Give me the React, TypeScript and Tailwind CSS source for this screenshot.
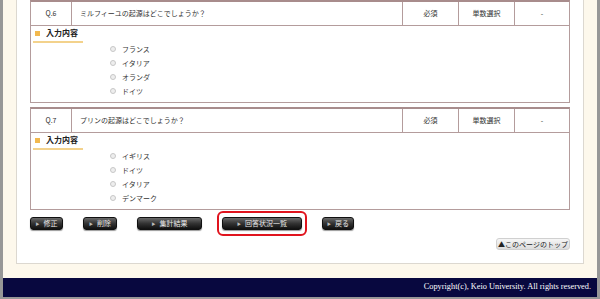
const jp = { fontFamily: '"Noto Sans CJK JP", "Noto Sans", sans-serif' }

interface Question {
  no: string
  text: string
  options: string[]
}

const questions: Question[] = [
  { no: 'Q.6', text: 'ミルフィーユの起源はどこでしょうか？', options: ['フランス', 'イタリア', 'オランダ', 'ドイツ'] },
  { no: 'Q.7', text: 'プリンの起源はどこでしょうか？', options: ['イギリス', 'ドイツ', 'イタリア', 'デンマーク'] },
]

function QuestionBlock({ q }: { q: Question }) {
  return (
    <div className="border-x border-b border-t-2 border-[#b49c9c] border-t-[#a88c8c] text-[#333]">
      {/* Header row */}
      <div className="flex h-[24px] items-center border-b border-[#b49c9c] text-[7px]">
        <div className="flex h-full w-[41px] items-center justify-center border-r border-[#b49c9c]">{q.no}</div>
        <div className="flex h-full flex-1 items-center border-r border-[#b49c9c] pl-[8px]">{q.text}</div>
        <div className="flex h-full w-[56px] items-center justify-center border-r border-[#b49c9c]">必須</div>
        <div className="flex h-full w-[56px] items-center justify-center border-r border-[#b49c9c]">単数選択</div>
        <div className="flex h-full w-[54px] items-center justify-center">-</div>
      </div>

      {/* Answer area */}
      <div className="h-[76px] pl-[2px] pt-[1px]">
        <div className="flex w-[50px] items-center gap-[6px] border-b-2 border-[#f3d28c] pb-[2px] pl-[2px]">
          <span className="h-[5px] w-[5px] bg-[#f2b84e]" />
          <span className="text-[8px] font-bold leading-[12px] text-[#222]">入力内容</span>
        </div>
        <div className="ml-[77px] -mt-[1px] flex flex-col">
          {q.options.map((o) => (
            <div key={o} className="flex h-[14px] items-center gap-[6px] text-[7px]">
              <span className="h-[6px] w-[6px] rounded-full border border-[#c8c8c8] bg-[#eeeeee]" />
              <span>{o}</span>
            </div>
          ))}
        </div>
      </div>
    </div>
  )
}

function DarkButton({ label, width }: { label: string; width: string }) {
  return (
    <button
      type="button"
      className={`flex h-[13px] ${width} items-center justify-center gap-[4px] rounded-[3px] border border-[#111] bg-gradient-to-b from-[#6a6a6a] via-[#333] to-[#111] text-[7px] leading-none text-[#e8e8e8] shadow-[0_1px_1px_rgba(0,0,0,0.4)]`}
    >
      <span className="text-[4px] text-[#bbb]">▶</span>
      <span>{label}</span>
    </button>
  )
}

export default function App() {
  return (
    <div
      className="flex h-[299px] w-[600px] flex-col overflow-hidden border-x-[3px] border-b-2 border-[#979797] bg-[#fdf8ec]"
      style={jp}
    >
      {/* Content panel */}
      <div className="mx-[13px] flex h-[264px] shrink-0 flex-col border-x border-b border-[#dcd8d0] bg-white px-[13px]">
        <div className="flex flex-col gap-[4px]">
          {questions.map((q) => (
            <QuestionBlock key={q.no} q={q} />
          ))}
        </div>

        {/* Action buttons */}
        <div className="mt-[7px] flex items-center gap-[20px]">
          <DarkButton label="修正" width="w-[33px]" />
          <DarkButton label="削除" width="w-[34px]" />
          <DarkButton label="集計結果" width="w-[65px]" />
          <div className="relative">
            <DarkButton label="回答状況一覧" width="w-[80px]" />
            <span className="pointer-events-none absolute -inset-x-[5px] -inset-y-[6px] rounded-[6px] border-2 border-[#e0141e]" />
          </div>
          <DarkButton label="戻る" width="w-[32px]" />
        </div>

        <div className="mt-[8px] flex justify-end">
          <button
            type="button"
            className="flex h-[12px] w-[74px] items-center justify-center rounded-[3px] border border-[#d0d0d0] bg-gradient-to-b from-[#f6f6f6] to-[#dcdcdc] text-[7px] leading-none text-[#222]"
          >
            ▲このページのトップ
          </button>
        </div>
      </div>

      {/* Footer */}
      <div className="mt-[14px] flex h-[19px] shrink-0 items-center justify-end bg-[#08083f] pr-[6px]">
        <span className="text-[8.3px] text-white" style={{ fontFamily: '"Liberation Serif", serif' }}>
          Copyright(c), Keio University. All rights reserved.
        </span>
      </div>
    </div>
  )
}
